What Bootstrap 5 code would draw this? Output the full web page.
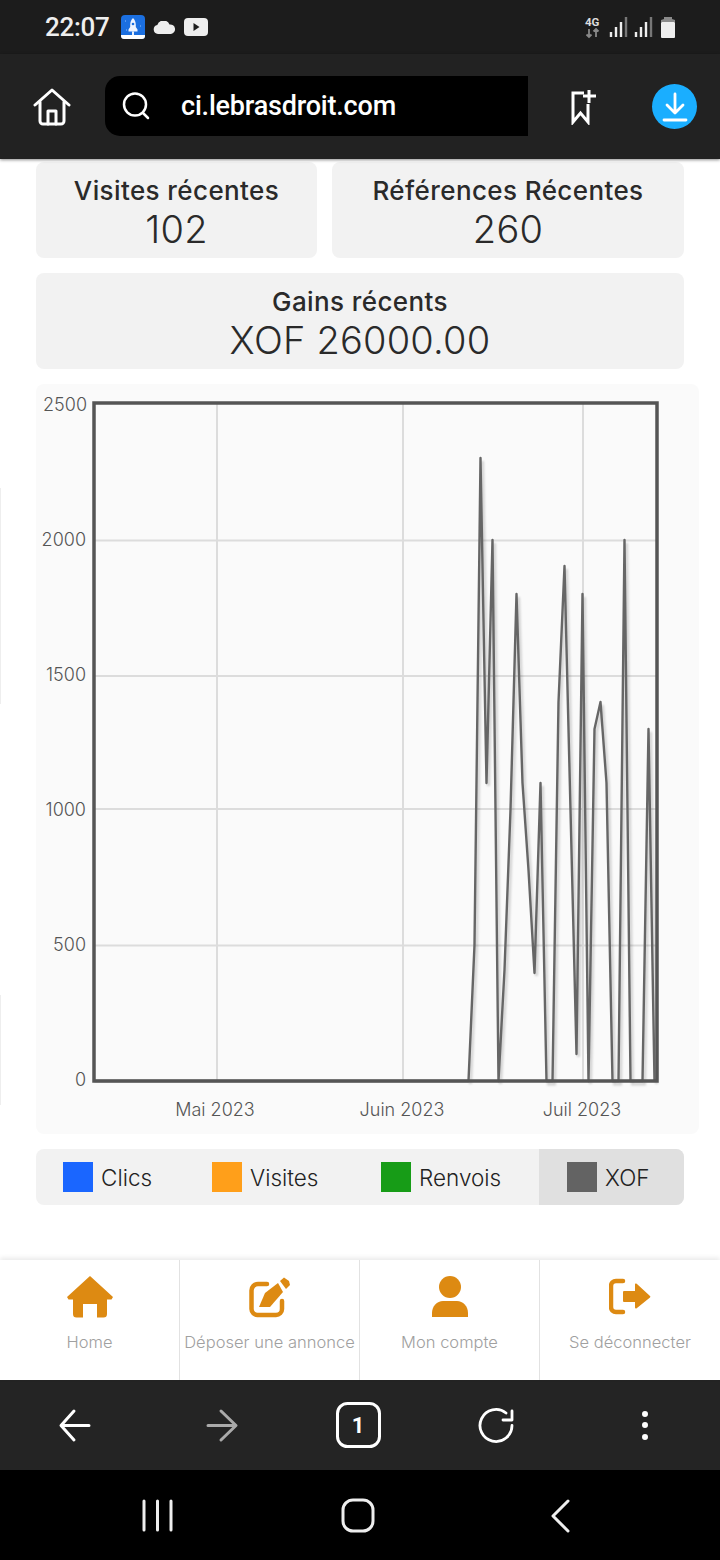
<!DOCTYPE html>
<html lang="fr">
<head>
<meta charset="utf-8">
<title>ci.lebrasdroit.com</title>
<link href="https://cdn.jsdelivr.net/npm/bootstrap@5.3.0/dist/css/bootstrap.min.css" rel="stylesheet">
<style>
html,body{margin:0;background:#fff}
.phone{width:720px;height:1560px;overflow:hidden;font-family:"Inter","Noto Sans",sans-serif;color:#222;position:relative}
.statusbar{height:54px;background:#1c1c1c;color:#eee;font-family:Roboto,sans-serif;padding:0 45px}
.clock{font-size:26px;font-weight:500;width:76px;letter-spacing:-.3px}
.toolbar{height:105px;background:#222;box-shadow:0 1px 3px rgba(0,0,0,.45);position:relative;z-index:2}
.homebtn{width:105px;padding-right:2px}
.urlbar{width:423px;height:60px;background:#000;border-radius:15px 0 0 15px;color:#fff;font-family:Roboto,sans-serif;font-size:27px;font-weight:500;padding-left:17px;letter-spacing:-.2px;margin-top:-1px}
.urlbar svg{margin-right:31px}
.bmark{margin-left:43px}
.dl{width:45px;height:45px;border-radius:50%;background:#1aaeff;margin-left:55px}
.mainarea{padding:3px 21px 0 36px}
.statrow{margin-bottom:15px}
.stat{background:#f2f2f2;border-radius:8px;height:96px;text-align:center;padding-top:13px}
.stat-a{width:281px;margin-right:15px}.stat-b{width:352px}.stat-c{width:648px;margin-bottom:15px}
.stat h3{font-size:26px;font-weight:500;line-height:32px;margin:0;color:#2a2a2a;letter-spacing:.4px}
.stat p{font-size:38px;font-weight:300;line-height:44px;margin:0;color:#2a2a2a;letter-spacing:.2px}
.chartbox{width:663px;height:750px;background:#fafafa;border-radius:8px;margin-bottom:15px}
.chartbox svg{display:block}
.chartbox text{font-family:"Inter",sans-serif;font-size:18px;font-weight:300;fill:#555}
.legendbar{width:648px;height:56px;background:#f2f2f2;border-radius:8px;overflow:hidden;font-size:22.500px;font-weight:300}
.legendcell{height:56px}
.legendcell i{display:block;width:30px;height:30px;margin-right:8px}
.legendcell span{padding-top:2px}
.lc1{width:176px;padding-left:27px}.lc2{width:169px}.lc3{width:158px}.lc4{width:145px;background:#e0e0e0;padding-left:28px}
.navwrap{margin-top:55px;background:#fff;box-shadow:0 -2px 5px rgba(0,0,0,.09);position:relative}
.navcell{width:180px;height:120px;text-align:center;border-right:1px solid #e2e2e2;font-size:16.500px;font-weight:300;color:#a0a0a0;padding-top:16px;white-space:nowrap;letter-spacing:.02px}
.navcell:last-child{border-right:0}
.navcell svg{display:block;margin:0 auto 12px}
.browser{height:90px;background:#242424}
.sysnav{height:90px;background:#000}
.edge{position:absolute;left:0;width:1px;background:#eee}
.edge-a{top:488px;height:216px}.edge-b{top:995px;height:110px}
</style>
</head>
<body>
<div class="phone d-flex flex-column">
  <div class="edge edge-a"></div><div class="edge edge-b"></div>
  <div class="statusbar d-flex align-items-center">
    <span class="clock">22:07</span>
    <svg width="24" height="24" viewBox="0 0 24 24" class="me-2"><rect width="24" height="24" rx="4" fill="#1b6fe0"/><path d="M0 20h24v1a3 3 0 0 1-3 3H3a3 3 0 0 1-3-3z" fill="#fff"/><path d="M12 3c2 2 2.800 4 2.800 7v2l1.700 2.500v2H7.500v-2L9.200 12v-2C9.200 7 10 5 12 3z" fill="#eef4ff"/><circle cx="12" cy="9" r="1.300" fill="#1b6fe0"/><path d="M12 16.500V20" stroke="#fff" stroke-width="1.800"/><path d="M4 6h1M19 11h1M5 15h1" stroke="#8fc0ff" stroke-width="1"/></svg>
    <svg width="23" height="13" viewBox="0 0 23 13" class="me-2"><path d="M5 13a4.500 4.500 0 0 1-.7-8.900A6.500 6.500 0 0 1 16.500 3.500 4.800 4.800 0 0 1 18 13z" fill="#eee"/></svg>
    <svg width="24" height="18" viewBox="0 0 24 18"><rect width="24" height="18" rx="4" fill="#eee"/><path d="M9.500 5l6 4-6 4z" fill="#1c1c1c"/></svg>
    <svg width="92" height="24" viewBox="-2 0 92 24" class="ms-auto">
      <text x="0" y="11" font-family="Roboto" font-size="11.500" font-weight="700" fill="#ddd">4G</text>
      <path d="M4 14v8M1.500 19.500 4 22l2.500-2.500M11 22v-8M8.500 16.500 11 14l2.500 2.500" stroke="#888" stroke-width="1.800" fill="none"/>
      <path d="M26 22v-5M31 22v-10M36 22V7M51 22v-5M56 22v-10M61 22V7" stroke="#eee" stroke-width="2.400" fill="none"/><path d="M41 22V2M66 22V2" stroke="#777" stroke-width="2.400"/>
      <rect x="76" y="7" width="14" height="16" rx="1" fill="#eee"/><path d="M76 7V5l3-1V2h8v2l3 1v2z" fill="#8a8a8a"/>
    </svg>
  </div>
  <div class="toolbar d-flex align-items-center">
    <div class="homebtn d-flex justify-content-center">
      <svg width="38" height="38" viewBox="0 0 38 38" fill="none" stroke="#fff" stroke-width="3" stroke-linecap="round" stroke-linejoin="round"><path d="M2 17 19 2l17 15"/><path d="M7 14v19a3 3 0 0 0 3 3h18a3 3 0 0 0 3-3V14"/><path d="M15 36V23h8v13"/></svg>
    </div>
    <div class="urlbar d-flex align-items-center">
      <svg width="28" height="28" viewBox="0 0 28 28" fill="none" stroke="#fff" stroke-width="2.500" stroke-linecap="round"><circle cx="13" cy="12.500" r="11"/><path d="m21 21 5 5"/></svg>
      <span>ci.lebrasdroit.com</span>
    </div>
    <svg width="26" height="36" viewBox="0 0 26 36" fill="none" stroke="#fff" stroke-width="3" class="bmark"><path d="M13 4H2v29l7.500-9 7.500 9V15"/><path d="M18 1v13M12 7h13"/></svg>
    <div class="dl d-flex align-items-center justify-content-center">
      <svg width="26" height="30" viewBox="0 0 26 30" fill="none" stroke="#fff" stroke-width="2.800" stroke-linecap="round" stroke-linejoin="round"><path d="M13 2v18M5 13l8 8 8-8M2 28h22"/></svg>
    </div>
  </div>
  <div class="mainarea flex-grow-1">
    <div class="d-flex statrow">
      <div class="stat stat-a"><h3>Visites récentes</h3><p>102</p></div>
      <div class="stat stat-b"><h3>Références Récentes</h3><p>260</p></div>
    </div>
    <div class="stat stat-c"><h3>Gains récents</h3><p>XOF 26000.00</p></div>
    <div class="chartbox">
      <svg width="663" height="750" viewBox="36 384 663 750">
        <defs><filter id="soft" x="-5%" y="-5%" width="110%" height="110%"><feGaussianBlur stdDeviation="1"/></filter></defs>
        <g stroke="#dcdcdc" stroke-width="2" fill="none">
          <path d="M94 540.500H657M94 676H657M94 809H657M94 945.500H657"/>
          <path d="M217 403V1081M403 403V1081M583 403V1081"/>
        </g>
        <g text-anchor="end">
          <text x="87" y="411">2500</text><text x="86" y="546">2000</text><text x="86" y="681">1500</text><text x="86" y="816">1000</text><text x="86" y="951">500</text><text x="86" y="1086">0</text>
        </g>
        <g text-anchor="middle">
          <text x="215" y="1116">Mai 2023</text><text x="402" y="1116">Juin 2023</text><text x="582" y="1116">Juil 2023</text>
        </g>
        <polyline fill="none" stroke="#000" stroke-opacity=".16" stroke-width="3" filter="url(#soft)" transform="translate(2.500 3)" points="468,1081 474,945 480,458 486,783 492,540 498,1081 504,970 510,810 516,594 522,783 528,870 534,973 540,783 546,1081 552,1081 558,702 564,566 570,810 576,1054 582,594 588,1081 594,729 600,702 606,783 612,1081 618,1081 624,540 630,1081 636,1081 642,1081 648,729 654,1081"/>
        <polyline fill="none" stroke="#666" stroke-width="2.400" stroke-linejoin="round" transform="translate(.5 0)" points="94,1081 468,1081 474,945 480,458 486,783 492,540 498,1081 504,970 510,810 516,594 522,783 528,870 534,973 540,783 546,1081 552,1081 558,702 564,566 570,810 576,1054 582,594 588,1081 594,729 600,702 606,783 612,1081 618,1081 624,540 630,1081 636,1081 642,1081 648,729 654,1081"/>
        <rect x="94" y="403" width="563" height="678" fill="none" stroke="#555" stroke-width="3.500"/>
      </svg>
    </div>
    <div class="legendbar d-flex">
      <div class="legendcell lc1 d-flex align-items-center"><i style="background:#1a66ff"></i><span>Clics</span></div>
      <div class="legendcell lc2 d-flex align-items-center"><i style="background:#ff9f1a"></i><span>Visites</span></div>
      <div class="legendcell lc3 d-flex align-items-center"><i style="background:#179c17"></i><span>Renvois</span></div>
      <div class="legendcell lc4 d-flex align-items-center"><i style="background:#636363"></i><span>XOF</span></div>
    </div>
  </div>
  <div class="navwrap d-flex">
    <div class="navcell">
      <svg width="46" height="42" viewBox="0 0 46 42" fill="#dd8a12"><path d="M23 0 46 21l-1.500 2.500H40V38a3.500 3.500 0 0 1-3.500 3.500H30V28H16v13.500H9.500A3.500 3.500 0 0 1 6 38V23.500H1.500L0 21z"/></svg>
      Home
    </div>
    <div class="navcell">
      <svg width="42" height="42" viewBox="0 0 42 42" fill="none"><path d="M18 8H9a6.500 6.500 0 0 0-6.500 6.500V33A6 6 0 0 0 9 39h18a6 6 0 0 0 6-6V25" stroke="#dd8a12" stroke-width="4.500" stroke-linecap="round"/><path d="M10 31l6-14L29 7l5 9-13 15z" fill="#dd8a12"/><path d="M31 5l4-3.500 5 3.500 1 4-4 4z" fill="#dd8a12"/></svg>
      Déposer une annonce
    </div>
    <div class="navcell">
      <svg width="36" height="42" viewBox="0 0 36 42" fill="#dd8a12"><ellipse cx="18" cy="11" rx="11" ry="11"/><path d="M0 41v-4c0-7 5-12 11-12h14c6 0 11 5 11 12v4z"/></svg>
      Mon compte
    </div>
    <div class="navcell">
      <svg width="42" height="42" viewBox="0 0 42 42" fill="none"><path d="M14 5H7a5 5 0 0 0-5 5v21a5 5 0 0 0 5 5h7" stroke="#dd8a12" stroke-width="4.500" stroke-linecap="round"/><path d="M26 8.500a1 1 0 0 1 1.700-.7L41 20a1 1 0 0 1 0 1.500L27.700 32.200a1 1 0 0 1-1.700-.7V26H15a1 1 0 0 1-1-1V16a1 1 0 0 1 1-1h11z" fill="#dd8a12"/></svg>
      Se déconnecter
    </div>
  </div>
  <div class="browser">
    <svg width="720" height="90" viewBox="0 1380 720 90" fill="none" stroke="#fff" stroke-width="3" stroke-linecap="round" stroke-linejoin="round">
      <path d="M74 1411 61 1425.500l13 14.500M62 1425.500h27"/>
      <path d="M221 1411l15 14.500-15 14.500M208 1425.500h27" stroke="#aaa"/>
      <rect x="337.500" y="1403.500" width="42" height="43" rx="10"/>
      <path d="M512 1425.500a16 16 0 1 1-6-12.500" stroke-width="2.800"/><path d="M512 1411v9h-9" stroke-width="2.800"/>
      <circle cx="645" cy="1414" r="1.500" fill="#fff"/><circle cx="645" cy="1425" r="1.500" fill="#fff"/><circle cx="645" cy="1437" r="1.500" fill="#fff"/>
      <text x="358" y="1433" text-anchor="middle" font-family="Roboto" font-size="22" font-weight="700" fill="#fff" stroke="none">1</text>
    </svg>
  </div>
  <div class="sysnav">
    <svg width="720" height="90" viewBox="0 1470 720 90" fill="none" stroke="#eee" stroke-width="3" stroke-linecap="round" stroke-linejoin="round">
      <path d="M144 1501v29M157.500 1501v29M171 1501v29"/>
      <rect x="343" y="1500" width="30" height="31" rx="10"/>
      <path d="M568 1501l-15 15 15 15"/>
    </svg>
  </div>
</div>
</body>
</html>
